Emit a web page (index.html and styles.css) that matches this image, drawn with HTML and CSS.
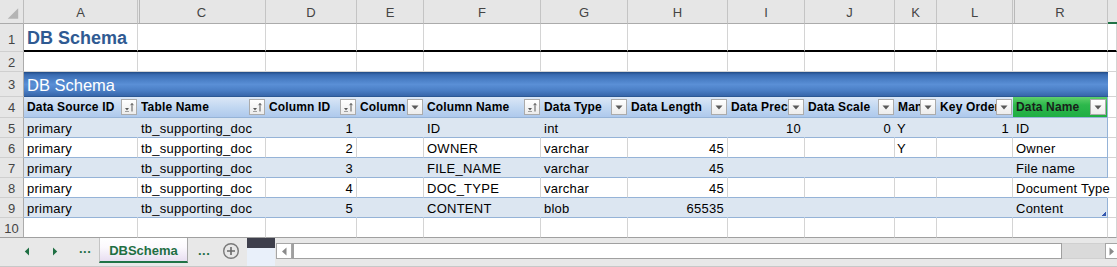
FILE: index.html
```html
<!DOCTYPE html>
<html>
<head>
<meta charset="utf-8">
<title>DB Schema</title>
<link rel="stylesheet" href="styles.css">
</head>
<body>
<div class="app">
  <div class="sheet">
    <div class="row colhead">
      <div class="corner"><svg width="24" height="23" viewBox="0 0 24 23"><path d="M19 8v11H8z" fill="#b4b4b4"/></svg></div>
      <div class="ch">A</div>
      <div class="ch hid">C</div>
      <div class="ch">D</div>
      <div class="ch">E</div>
      <div class="ch">F</div>
      <div class="ch">G</div>
      <div class="ch">H</div>
      <div class="ch">I</div>
      <div class="ch">J</div>
      <div class="ch">K</div>
      <div class="ch">L</div>
      <div class="ch hid">R</div>
      <div class="ch sel"></div>
    </div>

    <div class="row r1">
      <div class="rh">1</div>
      <div class="c title">DB Schema</div>
      <div class="c"></div><div class="c"></div><div class="c"></div><div class="c"></div><div class="c"></div>
      <div class="c"></div><div class="c"></div><div class="c"></div><div class="c"></div><div class="c"></div>
      <div class="c"></div><div class="c"></div>
    </div>

    <div class="row r2">
      <div class="rh">2</div>
      <div class="c"></div><div class="c"></div><div class="c"></div><div class="c"></div><div class="c"></div>
      <div class="c"></div><div class="c"></div><div class="c"></div><div class="c"></div><div class="c"></div>
      <div class="c"></div><div class="c"></div><div class="c"></div>
    </div>

    <div class="row r3">
      <div class="rh">3</div>
      <div class="band">DB Schema</div>
      <div class="c"></div>
    </div>

    <div class="row r4">
      <div class="rh">4</div>
      <div class="th"><span class="lbl">Data Source ID</span><span class="fb"><svg width="14" height="14" viewBox="0 0 14 14"><path d="M3 8h4l-2 2.6z" fill="#595959"/><path d="M3 11.5h4" stroke="#8a8a8a" stroke-width="0.8"/><path d="M10 3.5v8M8.6 5.2 10 3.5l1.4 1.7" stroke="#595959" stroke-width="1" fill="none"/></svg></span></div>
      <div class="th"><span class="lbl">Table Name</span><span class="fb"><svg width="14" height="14" viewBox="0 0 14 14"><path d="M3 8h4l-2 2.6z" fill="#595959"/><path d="M3 11.5h4" stroke="#8a8a8a" stroke-width="0.8"/><path d="M10 3.5v8M8.6 5.2 10 3.5l1.4 1.7" stroke="#595959" stroke-width="1" fill="none"/></svg></span></div>
      <div class="th"><span class="lbl">Column ID</span><span class="fb"><svg width="14" height="14" viewBox="0 0 14 14"><path d="M3 8h4l-2 2.6z" fill="#595959"/><path d="M3 11.5h4" stroke="#8a8a8a" stroke-width="0.8"/><path d="M10 3.5v8M8.6 5.2 10 3.5l1.4 1.7" stroke="#595959" stroke-width="1" fill="none"/></svg></span></div>
      <div class="th"><span class="lbl">Column Seq</span><span class="fb"><svg width="14" height="14" viewBox="0 0 14 14"><path d="M3.5 5.5h7L7 9.5z" fill="#595959"/></svg></span></div>
      <div class="th"><span class="lbl">Column Name</span><span class="fb"><svg width="14" height="14" viewBox="0 0 14 14"><path d="M3 8h4l-2 2.6z" fill="#595959"/><path d="M3 11.5h4" stroke="#8a8a8a" stroke-width="0.8"/><path d="M10 3.5v8M8.6 5.2 10 3.5l1.4 1.7" stroke="#595959" stroke-width="1" fill="none"/></svg></span></div>
      <div class="th"><span class="lbl">Data Type</span><span class="fb"><svg width="14" height="14" viewBox="0 0 14 14"><path d="M3.5 5.5h7L7 9.5z" fill="#595959"/></svg></span></div>
      <div class="th"><span class="lbl">Data Length</span><span class="fb"><svg width="14" height="14" viewBox="0 0 14 14"><path d="M3.5 5.5h7L7 9.5z" fill="#595959"/></svg></span></div>
      <div class="th"><span class="lbl">Data Precision</span><span class="fb"><svg width="14" height="14" viewBox="0 0 14 14"><path d="M3.5 5.5h7L7 9.5z" fill="#595959"/></svg></span></div>
      <div class="th"><span class="lbl">Data Scale</span><span class="fb"><svg width="14" height="14" viewBox="0 0 14 14"><path d="M3.5 5.5h7L7 9.5z" fill="#595959"/></svg></span></div>
      <div class="th"><span class="lbl">Mandatory</span><span class="fb"><svg width="14" height="14" viewBox="0 0 14 14"><path d="M3.5 5.5h7L7 9.5z" fill="#595959"/></svg></span></div>
      <div class="th"><span class="lbl">Key Order</span><span class="fb"><svg width="14" height="14" viewBox="0 0 14 14"><path d="M3.5 5.5h7L7 9.5z" fill="#595959"/></svg></span></div>
      <div class="th green"><span class="lbl">Data Name</span><span class="fb"><svg width="14" height="14" viewBox="0 0 14 14"><path d="M3.5 5.5h7L7 9.5z" fill="#595959"/></svg></span></div>
      <div class="c"></div>
    </div>

    <div class="row d odd">
      <div class="rh">5</div>
      <div class="c">primary</div><div class="c">tb_supporting_doc</div><div class="c n">1</div><div class="c"></div>
      <div class="c">ID</div><div class="c">int</div><div class="c n"></div><div class="c n">10</div>
      <div class="c n">0</div><div class="c k">Y</div><div class="c n">1</div><div class="c last">ID</div>
      <div class="c s"></div>
    </div>
    <div class="row d">
      <div class="rh">6</div>
      <div class="c">primary</div><div class="c">tb_supporting_doc</div><div class="c n">2</div><div class="c"></div>
      <div class="c">OWNER</div><div class="c">varchar</div><div class="c n">45</div><div class="c n"></div>
      <div class="c n"></div><div class="c k">Y</div><div class="c n"></div><div class="c last">Owner</div>
      <div class="c s"></div>
    </div>
    <div class="row d odd">
      <div class="rh">7</div>
      <div class="c">primary</div><div class="c">tb_supporting_doc</div><div class="c n">3</div><div class="c"></div>
      <div class="c">FILE_NAME</div><div class="c">varchar</div><div class="c n">45</div><div class="c n"></div>
      <div class="c n"></div><div class="c k"></div><div class="c n"></div><div class="c last">File name</div>
      <div class="c s"></div>
    </div>
    <div class="row d">
      <div class="rh">8</div>
      <div class="c">primary</div><div class="c">tb_supporting_doc</div><div class="c n">4</div><div class="c"></div>
      <div class="c">DOC_TYPE</div><div class="c">varchar</div><div class="c n">45</div><div class="c n"></div>
      <div class="c n"></div><div class="c k"></div><div class="c n"></div><div class="c last spill">Document Type</div>
      <div class="c s"></div>
    </div>
    <div class="row d odd">
      <div class="rh">9</div>
      <div class="c">primary</div><div class="c">tb_supporting_doc</div><div class="c n">5</div><div class="c"></div>
      <div class="c">CONTENT</div><div class="c">blob</div><div class="c n">65535</div><div class="c n"></div>
      <div class="c n"></div><div class="c k"></div><div class="c n"></div><div class="c last handle">Content</div>
      <div class="c s"></div>
    </div>
    <div class="row r10">
      <div class="rh">10</div>
      <div class="c"></div><div class="c"></div><div class="c"></div><div class="c"></div><div class="c"></div>
      <div class="c"></div><div class="c"></div><div class="c"></div><div class="c"></div><div class="c"></div>
      <div class="c"></div><div class="c"></div><div class="c"></div>
    </div>
  </div>

  <div class="tabbar">
    <div class="nav">
      <svg class="navl" width="6" height="9" viewBox="0 0 6 9"><path d="M5 0.5v8L0.8 4.5z" fill="#1f6f43"/></svg>
      <svg class="navr" width="6" height="9" viewBox="0 0 6 9"><path d="M1 0.5v8l4.2-4z" fill="#1f6f43"/></svg>
      <span class="dots">...</span>
    </div>
    <div class="tab">DBSchema</div>
    <span class="dots after">...</span>
    <svg class="plus" width="18" height="18" viewBox="0 0 18 18"><circle cx="9" cy="9" r="7.3" fill="none" stroke="#7a7a7a" stroke-width="1.4"/><path d="M9 5v8M5 9h8" stroke="#6a6a6a" stroke-width="1.6"/></svg>
    <div class="split"><div class="split-top"></div></div>
    <div class="hscroll">
      <div class="sbtn"><svg width="7" height="9" viewBox="0 0 7 9"><path d="M5.5 0.5v8L1 4.5z" fill="#8a8a8a"/></svg></div>
      <div class="thumb"></div>
      <div class="track"></div>
      <div class="sbtn r"><svg width="7" height="9" viewBox="0 0 7 9"><path d="M1.5 0.5v8L6 4.5z" fill="#8a8a8a"/></svg></div>
    </div>
  </div>
</div>
</body>
</html>
```

FILE: styles.css
```css
* { box-sizing: border-box; }

html, body {
  margin: 0;
  padding: 0;
  background: #ffffff;
}

body {
  font-family: "Liberation Sans", Arial, sans-serif;
  color: #000;
  width: 1117px;
  height: 267px;
  overflow: hidden;
}

.app {
  display: flex;
  flex-direction: column;
  width: 1117px;
  height: 267px;
}

.sheet {
  display: flex;
  flex-direction: column;
}

.row {
  display: grid;
  grid-template-columns: 24px 114px 128px 91px 67px 117px 87px 100px 77px 90px 42px 76px 95px 1fr;
  height: 20px;
}

/* column header */
.colhead {
  height: 24px;
  background: #e6e6e6;
}
.corner {
  border-right: 1px solid #bdbdbd;
  border-bottom: 1px solid #ababab;
  display: flex;
}
.ch {
  border-right: 1px solid #c4c4c4;
  border-bottom: 1px solid #ababab;
  font-size: 13px;
  color: #444;
  display: flex;
  align-items: center;
  justify-content: center;
  padding-top: 2px;
}
.ch.hid {
  background: linear-gradient(to right, #e6e6e6 1px, #b9b9b9 1px, #b9b9b9 2px, #e6e6e6 2px);
}
.ch.sel {
  border-right: 0;
  border-bottom: 2px solid #217346;
}

/* row headers */
.rh {
  background: #e6e6e6;
  border-right: 1px solid #ababab;
  border-bottom: 1px solid #cfcfcf;
  font-size: 13px;
  color: #444;
  display: flex;
  align-items: center;
  justify-content: center;
  padding-top: 1px;
}

/* cells */
.c {
  border-right: 1px solid #d4d4d4;
  border-bottom: 1px solid #d4d4d4;
  font-size: 13px;
  letter-spacing: 0.25px;
  padding: 0 3px;
  white-space: nowrap;
  overflow: hidden;
  display: flex;
  align-items: center;
  padding-top: 1px;
}
.c.n { justify-content: flex-end; }
.c.k { padding-left: 2px; }

.r1 { height: 28px; }
.r1 .c {
  border-bottom: 2px solid #000;
}
.r1 .rh { padding-top: 4px; }
.title {
  font-size: 18px;
  font-weight: bold;
  letter-spacing: 0;
  color: #2f5a92;
  padding-top: 3px;
  overflow: visible;
}

.r3 { height: 25px; }
.band {
  grid-column: 2 / 14;
  background: linear-gradient(#2b5797 0, #3a6cb2 8%, #4f84cb 35%, #5a8fd6 50%, #4b7fc6 75%, #3766aa 100%);
  border-top: 1px solid #24508c;
  border-bottom: 1px solid #2c5894;
  color: #ffffff;
  font-size: 16.5px;
  display: flex;
  align-items: center;
  padding: 1px 3px 0;
}

.r4 { height: 21px; }
.th {
  background: linear-gradient(#dbe7f6, #c0d6f1 55%, #aec9ec);
  border-bottom: 1px solid #95b3d7;
  display: flex;
  align-items: center;
  padding-left: 3px;
  padding-right: 1px;
  min-width: 0;
  font-size: 12px;
  font-weight: bold;
  letter-spacing: 0.15px;
}
.th .lbl {
  flex: 1;
  min-width: 0;
  overflow: hidden;
  white-space: nowrap;
}
.th .fb {
  flex: none;
  width: 16px;
  height: 16px;
  border: 1px solid #ababab;
  background: linear-gradient(#ffffff, #ececec);
  display: flex;
  align-items: center;
  justify-content: center;
}
.th.green {
  background: linear-gradient(#5fcf6b, #2db84c 40%, #1fae43);
  color: #1a1f1b;
  border-right: 1px solid #95b3d7;
  padding-left: 3px;
}

/* data rows */
.d .c {
  border-bottom-color: #95b3d7;
}
.d.odd .c {
  background: #dce6f1;
  border-right-color: #dce6f1;
}
.d .c.last {
  border-right-color: #95b3d7;
}
.d .c.s {
  background: transparent;
  border-right-color: #d4d4d4;
  border-bottom-color: #d4d4d4;
}
.d .c.spill {
  overflow: visible;
  border-right-color: transparent;
}
.d.odd .c.handle {
  background: linear-gradient(135deg, transparent 50%, #3558b0 50%) no-repeat right 1px bottom 1px / 4px 4px, #dce6f1;
}

.r10 .c, .r10 .rh {
  border-bottom: 1px solid #a0a0a0;
}

/* tab bar */
.tabbar {
  flex: 1;
  display: flex;
  align-items: flex-start;
  background: #e8e8e8;
  border-bottom: 2px solid #c8c8c8;
}
.nav {
  width: 99px;
  height: 26px;
  display: flex;
  align-items: center;
  flex: none;
}
.navl { margin-left: 24px; }
.navr { margin-left: 22px; }
.dots {
  color: #1f6f43;
  font-weight: bold;
  font-size: 13px;
  margin-left: 21px;
  letter-spacing: 0.5px;
  padding-bottom: 5px;
}
.dots.after {
  margin-left: 10px;
  margin-top: 5px;
  padding-bottom: 0;
}
.tab {
  flex: none;
  width: 89px;
  height: 25px;
  background: linear-gradient(#ffffff 0, #fbf9fd 40%, #e8def1 100%);
  border-left: 1px solid #c4c4c4;
  border-right: 1px solid #a8a8a8;
  border-bottom: 2px solid #217346;
  color: #1f6f43;
  font-weight: bold;
  font-size: 13px;
  display: flex;
  align-items: center;
  justify-content: center;
  padding-top: 1px;
}
.plus {
  flex: none;
  margin-left: 12px;
  margin-top: 4px;
}
.split {
  flex: none;
  width: 28px;
  height: 28px;
  margin-left: 7px;
  background: #e9f0fa;
}
.split-top {
  height: 10px;
  background: #3e3f4c;
}
.hscroll {
  flex: 1;
  display: flex;
  margin-left: 1px;
  margin-top: 5px;
  height: 16px;
}
.sbtn {
  width: 16px;
  height: 16px;
  flex: none;
  background: #ffffff;
  border: 1px solid #a6a6a6;
  display: flex;
  align-items: center;
  justify-content: center;
}
.sbtn.r {
  width: 12px;
  justify-content: flex-start;
  padding-left: 2px;
  border-right: 0;
}
.thumb {
  width: 770px;
  flex: none;
  background: #ffffff;
  border: 1px solid #a0a0a0;
  border-left: 2px solid #a0a0a0;
}
.track {
  flex: 1;
  background: #dadada;
  border-top: 1px solid #d0d0d0;
  border-bottom: 1px solid #d0d0d0;
}
```
